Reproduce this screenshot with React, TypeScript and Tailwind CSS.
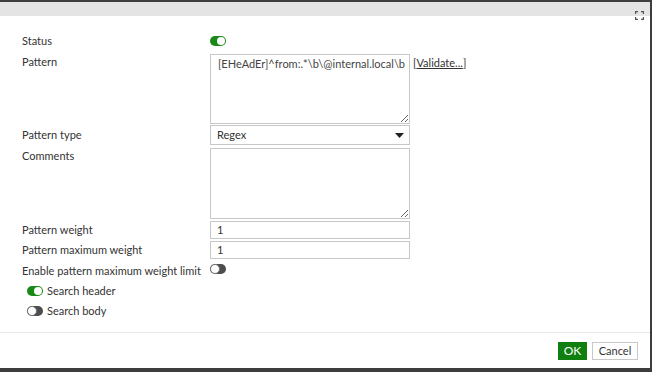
import React from "react";

const Toggle = ({ on }: { on?: boolean }) =>
  on ? (
    <span className="flex h-[10px] w-[16px] items-center justify-end rounded-full bg-[#178a17] pr-[1px]">
      <span className="h-[8px] w-[8px] rounded-full bg-white" />
    </span>
  ) : (
    <span className="flex h-[10px] w-[16px] items-center justify-start rounded-full bg-[#4d4d4d]">
      <span className="h-[10px] w-[10px] rounded-full border border-[#777] bg-white" />
    </span>
  );

const Row = ({
  label,
  top,
  children,
  className = "",
}: {
  label: string;
  top?: boolean;
  children: React.ReactNode;
  className?: string;
}) => (
  <div className={`flex pl-[22px] ${top ? "items-start" : "items-center"} ${className}`}>
    <div className="w-[188px] shrink-0 leading-[16px]">{label}</div>
    {children}
  </div>
);

export default function App() {
  return (
    <div className="h-[372px] w-[652px] bg-[#3d3d3d] pt-[2px] pr-[2px] font-['Lato','Liberation_Sans',sans-serif] text-[11px] text-[#333]">
      <div className="flex h-[366px] flex-col bg-white">
        <div className="relative h-[14px] bg-[#e4e4e4]">
          <svg
            className="absolute right-[6px] top-[9px]"
            width="9"
            height="9"
            viewBox="0 0 9 9"
            fill="none"
            stroke="#555"
            strokeWidth="1.2"
          >
            <path d="M0.6 3V0.6H3M6 0.6H8.4V3M8.4 6V8.4H6M3 8.4H0.6V6" />
          </svg>
        </div>

        <div className="flex flex-1 flex-col pt-[15px]">
          <Row label="Status" className="h-[20px]">
            <Toggle on />
          </Row>

          <Row label="Pattern" top className="mt-[3px]">
            <textarea
              readOnly
              wrap="off"
              defaultValue={"[EHeAdEr]^from:.*\\b\\@internal.local\\b"}
              className="h-[70px] w-[200px] resize overflow-hidden border border-[#c8c8c8] pl-[7px] pr-0 pt-[1px] leading-[16px] text-[#444] outline-none"
            />
            <span className="ml-[3px] mt-[1px] leading-[16px]">
              [<span className="underline">Validate...</span>]
            </span>
          </Row>

          <Row label="Pattern type" className="mt-[1px]">
            <div className="flex h-[20px] w-[200px] items-center justify-between border border-[#c8c8c8] pl-[6px] pr-[5px]">
              <span>Regex</span>
              <svg width="9" height="5" viewBox="0 0 9 5">
                <path d="M0 0H9L4.5 5Z" fill="#222" />
              </svg>
            </div>
          </Row>

          <Row label="Comments" top className="mt-[3px]">
            <textarea
              readOnly
              className="h-[71px] w-[200px] resize border border-[#c8c8c8] outline-none"
            />
          </Row>

          <Row label="Pattern weight" className="mt-[2px]">
            <div className="flex h-[18px] w-[200px] items-center border border-[#c8c8c8] pl-[6px]">1</div>
          </Row>

          <Row label="Pattern maximum weight" className="mt-[2px]">
            <div className="flex h-[18px] w-[200px] items-center border border-[#c8c8c8] pl-[6px]">1</div>
          </Row>

          <Row label="Enable pattern maximum weight limit" className="mt-[3px] h-[18px]">
            <span className="-mt-[5px]">
              <Toggle />
            </span>
          </Row>

          <div className="mt-[2px] flex h-[18px] items-center gap-[4px] pl-[27px]">
            <Toggle on />
            <span>Search header</span>
          </div>
          <div className="mt-[2px] flex h-[18px] items-center gap-[4px] pl-[27px]">
            <Toggle />
            <span>Search body</span>
          </div>

          <div className="mt-[12px] flex flex-1 items-start justify-end gap-[5px] border-t border-[#e8e8e8] pr-[12px] pt-[9px]">
            <button className="h-[18px] w-[29px] bg-[#0f7f0f] text-[12px] leading-[18px] text-white">OK</button>
            <button className="h-[18px] w-[46px] border border-[#c8c8c8] bg-white text-[11px] leading-[16px] text-[#333]">
              Cancel
            </button>
          </div>
        </div>
      </div>
    </div>
  );
}
